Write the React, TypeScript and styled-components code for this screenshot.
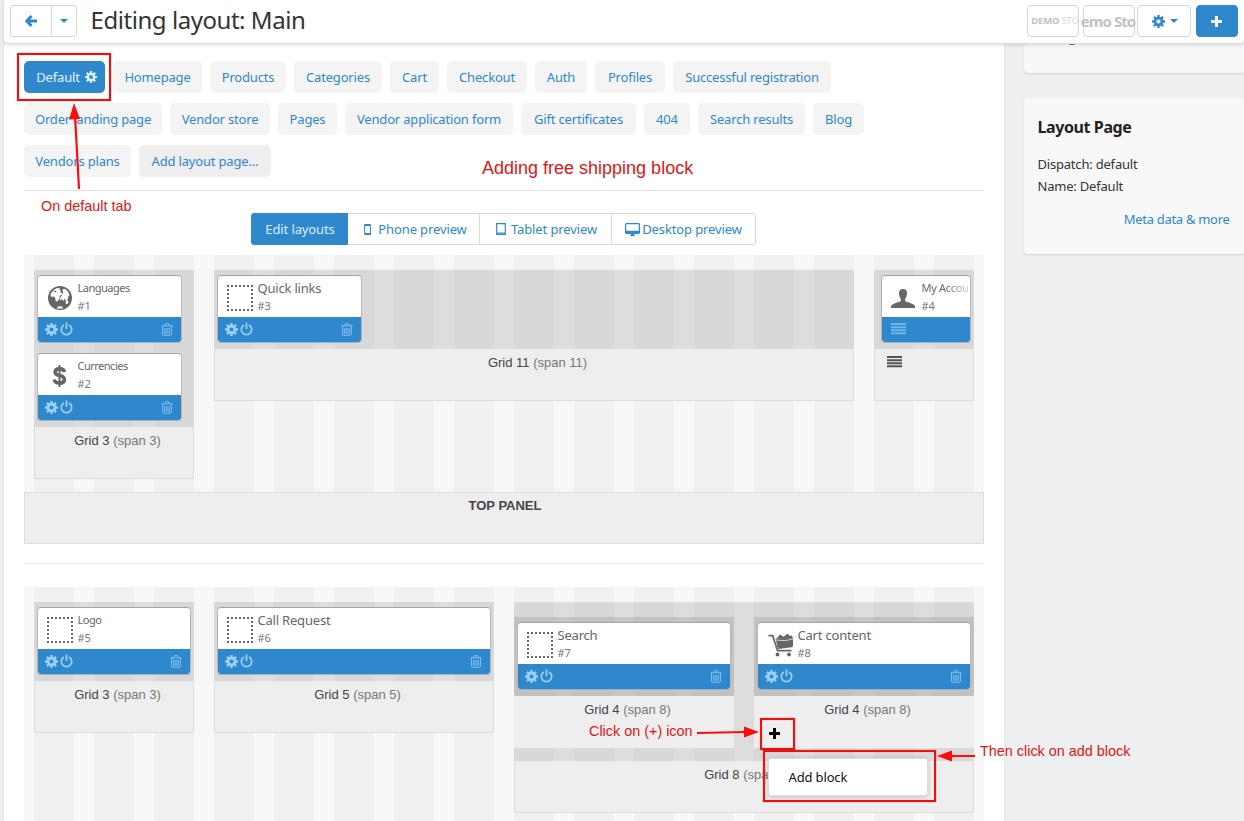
import React from "react";
import styled, { createGlobalStyle, css } from "styled-components";

const BLUE = "#2f87cc";
const UI = `"Noto Sans", "Open Sans", sans-serif`;
const ARIAL = `"Liberation Sans", Arial, sans-serif`;

const Global = createGlobalStyle`
  * { box-sizing: border-box; }
  body { margin: 0; background: #eeeff0; font: 13px/20px ${UI}; color: #333; overflow: hidden; }
`;

const Page = styled.div`
  position: relative;
  width: 1244px;
  height: 821px;
  overflow: hidden;
  background: #eeeff1;
  padding-left: 4px;
  display: flex;
  flex-direction: column;
`;
const Header = styled.header`
  height: 44px;
  flex: none;
  background: #fff;
  border-bottom: 1px solid #dcdddf;
  border-radius: 0 0 4px 4px;
  box-shadow: 0 1px 4px rgba(0, 0, 0, 0.14);
  display: flex;
  align-items: flex-start;
  padding: 5px 6px 0 6px;
  z-index: 2;
`;
const BackGroup = styled.div`
  width: 67px;
  height: 32px;
  display: flex;
  border: 1px solid #d5d6da;
  border-radius: 3px;
`;
const BackPart = styled.div<{ $w: number; $line?: boolean }>`
  width: ${(p) => p.$w}px;
  display: flex;
  align-items: center;
  justify-content: center;
  ${(p) => p.$line && css`border-left: 1px solid #d5d6da;`}
`;
const Title = styled.h1`
  margin: 0 0 0 13.5px;
  font: 400 24px/30px ${UI};
  letter-spacing: -0.45px;
  white-space: nowrap;
  flex: 1;
`;
const HeaderButton = styled.div<{ $w: number; $ml?: number; $solid?: boolean; $pad?: string }>`
  width: ${(p) => p.$w}px;
  height: 32px;
  margin-left: ${(p) => p.$ml ?? 0}px;
  padding: ${(p) => p.$pad ?? "0"};
  border: 1px solid ${(p) => (p.$solid ? BLUE : "#d5d6da")};
  background: ${(p) => (p.$solid ? BLUE : "#fff")};
  border-radius: 4px;
  display: flex;
  align-items: center;
  justify-content: center;
  gap: 5px;
  color: ${BLUE};
  white-space: nowrap;
`;
const StoreText = styled.span<{ $big?: boolean }>`
  font: bold ${(p) => (p.$big ? 15 : 9.5)}px/20px ${UI};
  color: #c2c2c2;
  letter-spacing: ${(p) => (p.$big ? -0.95 : -0.2)}px;
  i { font-style: normal; font-weight: 400; color: #dadada; }
`;
const Columns = styled.div`
  display: flex;
  flex: 1;
  min-height: 0;
`;
const Main = styled.main`
  width: 1000px;
  flex: none;
  background: #fff;
  padding: 17px 20px 0;
  box-shadow: 0 0 2px rgba(0, 0, 0, 0.1);
`;
const Tabs = styled.nav`
  display: flex;
  flex-direction: column;
  gap: 10px;
  padding-bottom: 13px;
  border-bottom: 1px solid #dee2e5;
`;
const TabRow = styled.div`
  display: flex;
  gap: 8px;
`;
const Tab = styled.a<{ $w: number; $kind?: string }>`
  width: ${(p) => p.$w}px;
  height: 32px;
  padding-left: ${(p) => (p.$kind === "active" ? 4 : 0)}px;
  line-height: 32px;
  border-radius: 5px;
  display: flex;
  align-items: center;
  justify-content: center;
  gap: 5px;
  white-space: nowrap;
  letter-spacing: -0.18px;
  color: ${(p) => (p.$kind === "active" ? "#e3f4ff" : BLUE)};
  background: ${(p) => (p.$kind === "active" ? BLUE : p.$kind === "add" ? "#eeeeee" : "#f4f4f4")};
`;
const Previews = styled.div`
  width: 505px;
  height: 32px;
  margin: 22px 0 10px 227px;
  display: flex;
`;
const Preview = styled.div<{ $w: number; $active?: boolean; $last?: boolean; $shift?: number }>`
  width: ${(p) => p.$w}px;
  padding-left: ${(p) => p.$shift ?? 0}px;
  border: 1px solid ${(p) => (p.$active ? BLUE : "#d8dbde")};
  border-left-width: ${(p) => (p.$active ? 1 : 0)}px;
  border-radius: ${(p) => (p.$active ? "3px 0 0 3px" : p.$last ? "0 3px 3px 0" : "0")};
  background: ${(p) => (p.$active ? BLUE : "#fff")};
  color: ${(p) => (p.$active ? "#d9efff" : BLUE)};
  display: flex;
  align-items: center;
  justify-content: center;
  white-space: nowrap;
  letter-spacing: -0.12px;
`;
const DeviceIcon = styled.svg<{ $gap: number }>`
  flex: none;
  margin-right: ${(p) => p.$gap}px;
`;
const Container = styled.section<{ $h: number }>`
  height: ${(p) => p.$h}px;
  padding: 15px 10px 0;
  display: flex;
  align-items: flex-start;
  gap: 20px;
  background: repeating-linear-gradient(90deg, #f7f7f7 0 10px, #f1f1f1 10px 50px, #f7f7f7 50px 60px);
`;
const ContainerFoot = styled.div`
  height: 52px;
  border: 1px solid #dcdcdc;
  background: #eee;
  padding-left: 2px;
  text-align: center;
  font: bold 13px/26px ${ARIAL};
  color: #444;
`;
const Rule = styled.div`
  height: 1px;
  margin: 19px 0 23px;
  background: #e9e9e9;
`;
const Grid = styled.div<{ $w: number }>`
  width: ${(p) => p.$w}px;
  flex: none;
`;
const Drop = styled.div<{ $h: number }>`
  height: ${(p) => p.$h}px;
  background: rgba(0, 0, 0, 0.1);
  padding: 5px 3px 0;
  display: flex;
  flex-direction: column;
  gap: 10px;
`;
const Nest = styled.div`
  height: 159px;
  background: rgba(0, 0, 0, 0.1);
  padding-top: 15px;
  display: flex;
  gap: 20px;
`;
const GridFoot = styled.div<{ $plain?: boolean }>`
  height: 52px;
  border: 1px solid #dcdcdc;
  border-top-color: #eee;
  ${(p) => p.$plain && css`border-color: #eee;`}
  background: #eee;
  padding-left: 7px;
  text-align: center;
  font: 13px/26px ${ARIAL};
  color: #444;
  span { color: #777; }
`;
const FootMenu = styled.div`
  height: 24px;
  padding-left: 5px;
  display: flex;
  align-items: center;
`;
const Block = styled.article<{ $w: number; $ml?: number }>`
  width: ${(p) => p.$w}px;
  height: 68px;
  margin-left: ${(p) => p.$ml ?? 0}px;
  border: 1px solid;
  border-color: #a5a5a5 #b5b5b5 #9fb4c5;
  border-radius: 4px;
  background: #fff;
`;
const BlockHead = styled.div`
  height: 41px;
  padding: 2px 0 0 9px;
  display: flex;
  gap: 4.5px;
  color: #666;
  white-space: nowrap;
`;
const BlockIcon = styled.div`
  width: 26px;
  height: 40px;
  flex: none;
  display: flex;
  align-items: center;
  justify-content: center;
`;
const BlockName = styled.div<{ $small?: boolean; $fade?: boolean }>`
  font-size: ${(p) => (p.$small ? 11 : 13)}px;
  line-height: 20px;
  letter-spacing: ${(p) => (p.$small ? -0.5 : -0.2)}px;
  ${(p) => p.$fade && css`
    width: 54px;
    letter-spacing: -0.3px;
    -webkit-mask-image: linear-gradient(90deg, #000 24px, transparent 54px);
    mask-image: linear-gradient(90deg, #000 24px, transparent 54px);
  `}
`;
const BlockId = styled.div`
  font-size: 11px;
  line-height: 16px;
  color: #777;
`;
const BlockBar = styled.div<{ $compact?: boolean }>`
  height: 25px;
  padding: 0 8px ${(p) => (p.$compact ? 2 : 1)}px ${(p) => (p.$compact ? 9 : 7)}px;
  border-radius: 0 0 3px 3px;
  background: ${BLUE};
  color: #9dd3fb;
  display: flex;
  align-items: center;
  gap: 2px;
  svg:last-child:not(:first-child) { margin-left: auto; }
`;
const Side = styled.aside`
  margin-left: 20px;
  width: 221px;
  flex: none;
  display: flex;
  flex-direction: column;
  gap: 25px;
`;
const Card = styled.div<{ $h: number }>`
  height: ${(p) => p.$h}px;
  flex: none;
  background: #f8f8f8;
  border-radius: 4px;
  box-shadow: 0 1px 2px rgba(0, 0, 0, 0.12);
  padding: 18px 15.5px 0 13.5px;
  line-height: 22px;
  white-space: nowrap;
`;
const CutLink = styled.div`
  height: 6px;
  margin: -20px 0 0 -4px;
  display: flex;
  align-items: flex-end;
  color: ${BLUE};
`;
const CardTitle = styled.h2`
  margin: 0 0 15px;
  font: bold 16px/22px ${UI};
  letter-spacing: -0.4px;
  color: #222;
`;
const CardText = styled.div`
  letter-spacing: -0.2px;
`;
const CardLink = styled.div`
  margin-top: 11px;
  text-align: right;
  letter-spacing: -0.3px;
  color: ${BLUE};
`;
const Frame = styled.div<{ $x: number; $y: number; $w: number; $h: number }>`
  position: absolute;
  z-index: 4;
  left: ${(p) => p.$x}px;
  top: ${(p) => p.$y}px;
  width: ${(p) => p.$w}px;
  height: ${(p) => p.$h}px;
  border: 2px solid #ed1010;
  box-shadow: 0 0 1px rgba(237, 16, 16, 0.6), inset 0 0 1px rgba(237, 16, 16, 0.6);
`;
const Note = styled.div<{ $x: number; $y: number; $s: number }>`
  position: absolute;
  z-index: 4;
  left: ${(p) => p.$x}px;
  top: ${(p) => p.$y}px;
  font: ${(p) => p.$s}px/20px ${ARIAL};
  color: #e01515;
  white-space: nowrap;
`;
const Arrows = styled.svg`
  position: absolute;
  inset: 0;
  z-index: 4;
`;
const PlusMark = styled.div`
  position: absolute;
  z-index: 4;
  left: 769px;
  top: 728px;
  display: flex;
`;
const Menu = styled.div`
  position: absolute;
  z-index: 3;
  left: 768px;
  top: 758px;
  width: 160px;
  height: 38px;
  padding-left: 19.5px;
  border-radius: 3px;
  background: #fff;
  border: 1px solid #ddd;
  box-shadow: 0 1px 5px rgba(0, 0, 0, 0.2);
  color: #111;
  letter-spacing: -0.15px;
  line-height: 36px;
`;

const Gear = ({ s = 13 }: { s?: number }) => (
  <svg width={s} height={s} viewBox="0 0 16 16" fill="none" stroke="currentColor">
    <circle cx="8" cy="8" r="4.2" strokeWidth="3.2" />
    <path
      strokeWidth="2.9"
      d="M8 0v3M8 13v3M0 8h3M13 8h3M2.4 2.4l2.1 2.1M11.5 11.5l2.1 2.1M13.6 2.4l-2.1 2.1M4.5 11.5l-2.1 2.1"
    />
  </svg>
);
const Power = () => (
  <svg width="13" height="14" viewBox="0 0 13 14" fill="none" stroke="currentColor" strokeWidth="1.7">
    <path d="M4 2.9A5.2 5.2 0 1 0 9 2.9" />
    <path d="M6.5 .5v6.5" />
  </svg>
);
const Trash = () => (
  <svg width="12" height="13" viewBox="0 0 12 13" fill="none" stroke="#84c3f0">
    <path d="M.5 2.8h11M3.5 2.6L4.5.7h3L8.5 2.6M1.6 3v8.2q0 1.1 1 1.1h6.8q1 0 1-1.1V3" />
    <path strokeWidth="1.5" opacity=".75" d="M3.8 5v6M6 5v6M8.2 5v6" />
  </svg>
);
const Lines = ({ c }: { c: string }) => (
  <svg width="15" height="12" viewBox="0 0 15 12" fill={c}>
    <path d="M0 0h15v2H0zM0 3.2h15v2H0zM0 6.2h15v2H0zM0 9.2h15v2H0z" />
  </svg>
);
const Caret = () => (
  <svg width="8" height="4" viewBox="0 0 8 4" fill={BLUE}>
    <path d="M0 0h8L4 4z" />
  </svg>
);
const Globe = () => (
  <svg width="24" height="24" viewBox="0 0 24 24">
    <circle cx="12" cy="12" r="12" fill="#666" />
    <path
      fill="#fff"
      d="M2.8 7.5Q5 4 8.5 2.3L12 2l-.8 1.8 1.700.5-.8 2 2.200.7-.2 1.600-2.300 1.200-.7 3.400-2 2.400-1.500-.6-.3-3-1.500-1.400-2 .3-1.200-1.400zM14.500 3.200l2.500-.4 3.200 3 1.200 3.500-1.300 1.700-.5 3-1.700 1.200-1.200-2.700-1.300 2.500-1.800-2.300-1.400 2-.4-2.500 2-2.700 1.400-2.500z"
    />
    <path fill="#fff" d="M8.700 22.200l1.300-1.700 3.700-.2 1.300 1.600q-3 1.300-6.300.3zM17.500 15.800l1.800-1.200 1.300.8-.8 2.400-1.800.3z" />
    <path fill="#666" d="M5.800 5.400l2-.9.500 1.100-1.500.9z" />
  </svg>
);
const Dollar = () => (
  <svg width="16" height="22" viewBox="0 0 16 22" fill="none" stroke="#666">
    <path strokeWidth="3.6" d="M12.4 7Q12 3.9 7.6 3.9 3.2 4 3.1 6.9 3 9.6 7.4 10.6 12.5 11.5 12.5 15 12.2 18.1 7.6 18.1 2.8 18.1 2.3 14.5" />
    <path strokeWidth="2" d="M7.5 0v22" />
  </svg>
);
const Person = () => (
  <svg width="26" height="19" viewBox="0 0 26 19" fill="#666">
    <path d="M12 0c3 0 4.200 2 4 4.800-.1 2.200-1.100 3.900-1.800 5.200v2c.4 1 8.500 2 9.800 5.200V19H0v-1.800C1.300 14 9.400 13 9.800 12v-2C9.100 8.700 8.100 7 8 4.800 7.800 2 9 0 12 0z" />
  </svg>
);
const Cart = () => (
  <svg width="26" height="24" viewBox="-1 0 26 24" fill="#666" overflow="visible">
    <path d="M8.500 5.800l3.500-4.300 3.500 2.200L19.500.8l2.500 2.200 2-.5 1 3.300z" />
    <path d="M7.500 5.500l17.500-.3v7.300q0 1.500-1.500 1.800L10 16z" />
    <path d="M8 7l9 .7 8-1.700" stroke="#fff" strokeWidth=".7" fill="none" />
    <path d="M.5 2.700h4.200l4.800 15h14" stroke="#666" strokeWidth="1.700" fill="none" />
    <circle cx="9.500" cy="21.500" r="1.900" />
    <circle cx="21" cy="21.500" r="1.900" />
  </svg>
);
const Dotted = () => (
  <svg width="26" height="26" viewBox="0 0 26 26">
    <rect x="1" y="1" width="24" height="24" fill="none" stroke="#666" strokeWidth="2" strokeDasharray="2 2" strokeDashoffset="1" />
  </svg>
);

type BlockProps = {
  name: string; id: number; w: number; ml?: number; small?: boolean; fade?: boolean;
  icon?: React.ReactNode; compact?: boolean;
};
const BlockCard = ({ name, id, w, ml, small, fade, icon, compact }: BlockProps) => (
  <Block $w={w} $ml={ml}>
    <BlockHead>
      <BlockIcon>{icon ?? <Dotted />}</BlockIcon>
      <div>
        <BlockName $small={small} $fade={fade}>{name}</BlockName>
        <BlockId>#{id}</BlockId>
      </div>
    </BlockHead>
    <BlockBar $compact={compact}>
      {compact ? <Lines c="#6fb6ea" /> : <><Gear /><Power /><Trash /></>}
    </BlockBar>
  </Block>
);

const ROWS: [string, number, string?][][] = [
  [["Default", 81, "active"], ["Homepage", 89], ["Products", 76], ["Categories", 88], ["Cart", 49], ["Checkout", 80], ["Auth", 52], ["Profiles", 70], ["Successful registration", 158]],
  [["Order landing page", 138], ["Vendor store", 100], ["Pages", 59], ["Vendor application form", 168], ["Gift certificates", 115], ["404", 46], ["Search results", 107], ["Blog", 51]],
  [["Vendors plans", 107], ["Add layout page…", 132, "add"]],
];

export default function App() {
  return (
    <Page>
      <Global />
      <Header>
        <BackGroup>
          <BackPart $w={40}>
            <svg width="12" height="12" viewBox="0 0 12 12" fill="none" stroke={BLUE} strokeWidth="2.8">
              <path d="M6.5 1L1.8 6l4.7 5M2 6h10" />
            </svg>
          </BackPart>
          <BackPart $w={25} $line><Caret /></BackPart>
        </BackGroup>
        <Title>Editing layout: Main</Title>
        <HeaderButton $w={52} $pad="0 0 0 4px"><StoreText>DEMO <i>STO</i></StoreText></HeaderButton>
        <HeaderButton $w={52} $ml={4} $pad="0 2px 1px 0"><StoreText $big>emo Sto</StoreText></HeaderButton>
        <HeaderButton $w={54} $ml={2} $pad="0 0 0 1px"><Gear /><Caret /></HeaderButton>
        <HeaderButton $w={42} $ml={5} $pad="0 1px 0 0" $solid>
          <svg width="11" height="11" viewBox="0 0 11 11" fill="#fff"><path d="M4 0h3v4h4v3H7v4H4V7H0V4h4z" /></svg>
        </HeaderButton>
      </Header>
      <Columns>
        <Main>
          <Tabs>
            {ROWS.map((row, i) => (
              <TabRow key={i}>
                {row.map(([label, w, kind]) => (
                  <Tab key={label} $w={w} $kind={kind}>{label}{kind === "active" && <Gear s={12} />}</Tab>
                ))}
              </TabRow>
            ))}
          </Tabs>
          <Previews>
            <Preview $w={97} $active $shift={1}>Edit layouts</Preview>
            <Preview $w={132} $shift={4}>
              <DeviceIcon $gap={7} width="7" height="11" viewBox="0 0 7 11">
                <path d="M.6.5h5.800v10H.6zM.6 1.500h5.800M.6 9.500h5.800" fill="none" stroke={BLUE} />
              </DeviceIcon>
              Phone preview
            </Preview>
            <Preview $w={132} $shift={2}>
              <DeviceIcon $gap={5} width="10" height="12" viewBox="0 0 10 12">
                <path d="M.7.7h8.600v10.600H.7zM1 10h8" fill="none" stroke={BLUE} strokeWidth="1.200" />
              </DeviceIcon>
              Tablet preview
            </Preview>
            <Preview $w={144} $last>
              <DeviceIcon $gap={2} width="15" height="13" viewBox="0 0 15 13" fill={BLUE}>
                <path fillRule="evenodd" d="M1 0h13l1 1v9l-1 1H9v1h1v1H5v-1h1v-1H1l-1-1V1zM1.200 1.200v6.600h12.600V1.200z" />
              </DeviceIcon>
              Desktop preview
            </Preview>
          </Previews>
          <Container $h={237}>
            <Grid $w={160}>
              <Drop $h={157}>
                <BlockCard name="Languages" id={1} w={145} small icon={<Globe />} />
                <BlockCard name="Currencies" id={2} w={145} small icon={<Dollar />} />
              </Drop>
              <GridFoot>Grid 3 <span>(span 3)</span></GridFoot>
            </Grid>
            <Grid $w={640}>
              <Drop $h={79}><BlockCard name="Quick links" id={3} w={145} /></Drop>
              <GridFoot>Grid 11 <span>(span 11)</span></GridFoot>
            </Grid>
            <Grid $w={100}>
              <Drop $h={79}><BlockCard name="My Accou" id={4} w={90} ml={4} small fade compact icon={<Person />} /></Drop>
              <GridFoot><FootMenu><Lines c="#555" /></FootMenu></GridFoot>
            </Grid>
          </Container>
          <ContainerFoot>TOP PANEL</ContainerFoot>
          <Rule />
          <Container $h={237}>
            <Grid $w={160}>
              <Drop $h={79}><BlockCard name="Logo" id={5} w={154} small /></Drop>
              <GridFoot>Grid 3 <span>(span 3)</span></GridFoot>
            </Grid>
            <Grid $w={280}>
              <Drop $h={79}><BlockCard name="Call Request" id={6} w={274} /></Drop>
              <GridFoot>Grid 5 <span>(span 5)</span></GridFoot>
            </Grid>
            <Grid $w={460}>
              <Nest>
                <Grid $w={220}>
                  <Drop $h={79}><BlockCard name="Search" id={7} w={214} /></Drop>
                  <GridFoot $plain>Grid 4 <span>(span 8)</span></GridFoot>
                </Grid>
                <Grid $w={220}>
                  <Drop $h={79}><BlockCard name="Cart content" id={8} w={214} icon={<Cart />} /></Drop>
                  <GridFoot $plain>Grid 4 <span>(span 8)</span></GridFoot>
                </Grid>
              </Nest>
              <GridFoot>Grid 8 <span>(span 8)</span></GridFoot>
            </Grid>
          </Container>
        </Main>
        <Side>
          <Card $h={29}><CutLink>Editing</CutLink></Card>
          <Card $h={156}>
            <CardTitle>Layout Page</CardTitle>
            <CardText>Dispatch: default</CardText>
            <CardText>Name: Default</CardText>
            <CardLink>Meta data &amp; more</CardLink>
          </Card>
        </Side>
      </Columns>

      <Menu>Add block</Menu>
      <PlusMark>
        <svg width="11" height="11" viewBox="0 0 11 11"><path d="M4 0h3v4h4v3H7v4H4V7H0V4h4z" /></svg>
      </PlusMark>
      <Frame $x={17} $y={53} $w={94} $h={48} />
      <Frame $x={760} $y={718} $w={35} $h={32} />
      <Frame $x={763} $y={750} $w={173} $h={52} />
      <Arrows width="1244" height="821" viewBox="0 0 1244 821" fill="#fb0d0d" stroke="#fb0d0d">
        <path strokeWidth="2.2" d="M79 189L75 115M697 733L745 732M975 756H950" />
        <path stroke="none" d="M74 103l6 16-11 .5zM759 732l-15 5.5v-11zM937 756l15-5.5v11z" />
      </Arrows>
      <Note $x={482} $y={158} $s={18}>Adding free shipping block</Note>
      <Note $x={41} $y={196} $s={14.4}>On default tab</Note>
      <Note $x={589} $y={721} $s={14.4}>Click on (+) icon</Note>
      <Note $x={980} $y={741} $s={14.4}>Then click on add block</Note>
    </Page>
  );
}
